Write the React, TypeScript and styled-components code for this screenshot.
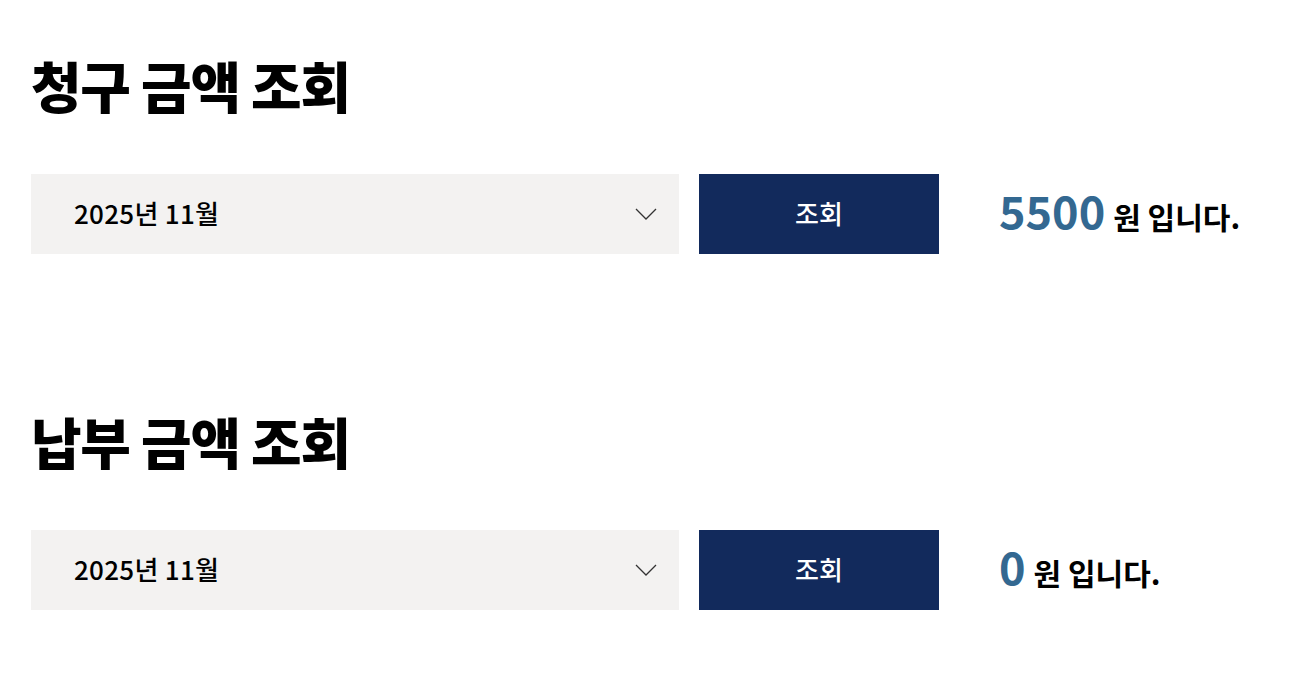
import React from "react";
import styled, { createGlobalStyle } from "styled-components";

const Global = createGlobalStyle`
  html, body { margin: 0; padding: 0; background: #fff; }
  body { font-family: "Noto Sans CJK KR", "Noto Sans", sans-serif; color: #000; }
`;

const Page = styled.div`
  padding: 46px 31px 0 31px;
  display: flex;
  flex-direction: column;
  gap: 148px;
`;

const Section = styled.section`
  display: flex;
  flex-direction: column;
  gap: 52px;
`;

const Title = styled.h2`
  margin: 0;
  font-size: 55px;
  font-weight: 900;
  letter-spacing: -1.25px;
  line-height: 76px;
`;

const Row = styled.div`
  display: flex;
  align-items: center;
`;

const Select = styled.div`
  width: 648px;
  height: 80px;
  background: #f3f2f1;
  display: flex;
  align-items: center;
  justify-content: space-between;
  padding: 0 22px 4px 43px;
  box-sizing: border-box;
  font-size: 26px;
  font-weight: 500;
  letter-spacing: 0.3px;
`;

const ChevronWrap = styled.span`
  display: flex;
  padding-top: 4px;
`;

const Button = styled.button`
  margin-left: 20px;
  width: 240px;
  height: 80px;
  padding: 0 0 4px;
  border: none;
  background: #122a5c;
  color: #fff;
  font-family: inherit;
  font-size: 26px;
  font-weight: 500;
`;

const Result = styled.div<{ $offset: number }>`
  margin-left: ${(p) => p.$offset}px;
  margin-bottom: 10px;
  display: flex;
  align-items: baseline;
  gap: 8px;
  font-size: 30px;
  font-weight: 700;
`;

const Amount = styled.span`
  color: #336891;
  font-size: 45px;
  font-weight: 700;
`;

const Chevron = () => (
  <ChevronWrap>
    <svg width="22" height="14" viewBox="0 0 22 14" fill="none">
      <path d="M1 2 L11 12 L21 2" stroke="#333" strokeWidth="1.3" />
    </svg>
  </ChevronWrap>
);

const Block = ({ title, amount }: { title: string; amount: string }) => (
  <Section>
    <Title>{title}</Title>
    <Row>
      <Select>
        <span>2025년 11월</span>
        <Chevron />
      </Select>
      <Button>조회</Button>
      <Result $offset={60}>
        <Amount>{amount}</Amount>
        <span>원 입니다.</span>
      </Result>
    </Row>
  </Section>
);

export default function App() {
  return (
    <>
      <Global />
      <Page>
        <Block title="청구 금액 조회" amount="5500" />
        <Block title="납부 금액 조회" amount="0" />
      </Page>
    </>
  );
}
